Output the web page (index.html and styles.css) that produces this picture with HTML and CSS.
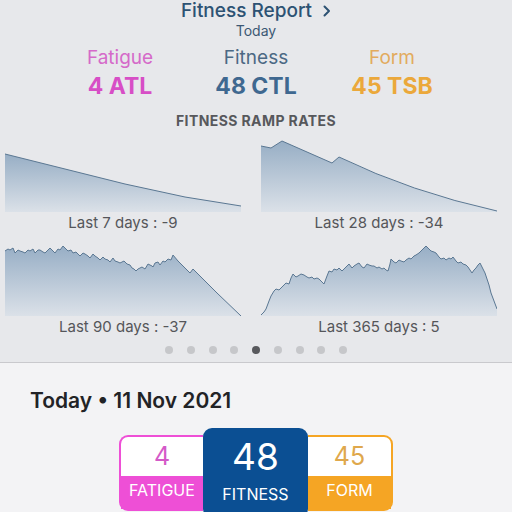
FILE: index.html
```html
<!DOCTYPE html>
<html lang="en">
<head>
  <meta charset="UTF-8" />
  <meta name="viewport" content="width=device-width, initial-scale=1.0"/>
  <title>Fitness Report</title>
  <link rel="stylesheet" href="styles.css">
</head>
<body>
  <section class="report">
    <h1 class="title">Fitness Report
      <svg class="chevron" width="8" height="12" viewBox="0 0 8 12"><path d="M1.5 1.5 L6 6 L1.5 10.5" fill="none" stroke="currentColor" stroke-width="2" stroke-linecap="round" stroke-linejoin="round"/></svg>
    </h1>
    <div class="subtitle">Today</div>

    <div class="stats">
      <div class="stat fatigue">
        <div class="stat-label">Fatigue</div>
        <div class="stat-value">4 ATL</div>
      </div>
      <div class="stat fitness">
        <div class="stat-label">Fitness</div>
        <div class="stat-value">48 CTL</div>
      </div>
      <div class="stat form">
        <div class="stat-label">Form</div>
        <div class="stat-value">45 TSB</div>
      </div>
    </div>

    <h2 class="section-head">FITNESS RAMP RATES</h2>

    <div class="charts">
      <figure class="chart">
        <svg width="236" height="72" viewBox="0 0 236 72">
          <defs>
            <linearGradient id="rampFill" x1="0" y1="0" x2="0" y2="1">
              <stop offset="0" stop-color="#97aec5"/>
              <stop offset="1" stop-color="#dbe1e8"/>
            </linearGradient>
          </defs>
          <path class="area" d="M0 14 L60 29 L120 44 L180 57 L236 66 L236 72 L0 72 Z"/>
          <path class="line" d="M0 14 L60 29 L120 44 L180 57 L236 66"/>
        </svg>
        <figcaption>Last 7 days : -9</figcaption>
      </figure>

      <figure class="chart">
        <svg width="236" height="72" viewBox="0 0 236 72">
          <path class="area" d="M0 6 L10 8 L21 1 L71 23 L78 17 Q150 52 236 71 L236 72 L0 72 Z"/>
          <path class="line" d="M0 6 L10 8 L21 1 L71 23 L78 17 Q150 52 236 71"/>
        </svg>
        <figcaption>Last 28 days : -34</figcaption>
      </figure>

      <figure class="chart">
        <svg width="236" height="72" viewBox="0 0 236 72">
          <path class="area" d="M0 7 L3 5 L5 6 L8 4 L10 9 L13 6 L15 7 L18 8 L20 9 L23 6 L25 7 L28 5 L30 9 L33 6 L35 6 L38 8 L40 9 L43 6 L45 4 L48 7 L50 9 L53 5 L55 6 L58 2 L61 5 L63 7 L66 6 L68 9 L71 8 L75 12 L78 9 L80 10 L83 12 L85 14 L88 10 L90 12 L93 14 L95 16 L98 13 L100 15 L103 16 L105 18 L108 14 L110 17 L113 18 L115 19 L119 17 L122 20 L125 21 L127 24 L129 25 L131 27 L133 25 L135 24 L137 23 L140 25 L143 20 L145 21 L147 22 L148 23 L150 19 L153 18 L155 21 L158 17 L160 18 L163 15 L166 16 L168 11 L173 17 L180 24 L185 29 L188 25 L195 32 L212 49 L236 72 L0 72 Z"/>
          <path class="line" d="M0 7 L3 5 L5 6 L8 4 L10 9 L13 6 L15 7 L18 8 L20 9 L23 6 L25 7 L28 5 L30 9 L33 6 L35 6 L38 8 L40 9 L43 6 L45 4 L48 7 L50 9 L53 5 L55 6 L58 2 L61 5 L63 7 L66 6 L68 9 L71 8 L75 12 L78 9 L80 10 L83 12 L85 14 L88 10 L90 12 L93 14 L95 16 L98 13 L100 15 L103 16 L105 18 L108 14 L110 17 L113 18 L115 19 L119 17 L122 20 L125 21 L127 24 L129 25 L131 27 L133 25 L135 24 L137 23 L140 25 L143 20 L145 21 L147 22 L148 23 L150 19 L153 18 L155 21 L158 17 L160 18 L163 15 L166 16 L168 11 L173 17 L180 24 L185 29 L188 25 L195 32 L212 49 L236 72"/>
        </svg>
        <figcaption>Last 90 days : -37</figcaption>
      </figure>

      <figure class="chart">
        <svg width="236" height="72" viewBox="0 0 236 72">
          <path class="area" d="M0 71 L3 68 L5 65 L8 57 L10 52 L13 47 L15 45 L18 46 L20 44 L23 41 L25 39 L28 40 L30 34 L32 30 L35 33 L37 32 L40 30 L43 31 L46 33 L48 34 L51 33 L53 35 L56 34 L58 35 L61 38 L63 40 L66 32 L68 27 L71 28 L73 25 L76 26 L78 24 L81 27 L83 25 L86 22 L88 20 L91 24 L93 22 L96 20 L98 19 L101 23 L103 24 L106 20 L108 21 L111 22 L113 22 L116 24 L118 23 L121 25 L123 24 L125 26 L127 27 L129 20 L130 15 L133 18 L135 19 L138 16 L140 17 L143 18 L145 16 L148 14 L150 15 L153 12 L155 11 L158 9 L160 7 L163 4 L165 2 L168 5 L170 7 L173 8 L175 9 L178 13 L180 15 L183 14 L185 16 L188 14 L190 15 L192 13 L195 17 L197 19 L200 18 L202 20 L205 21 L207 23 L209 26 L211 29 L213 26 L215 24 L217 21 L219 19 L221 23 L222 25 L224 29 L225 32 L228 41 L230 49 L233 57 L236 65 L236 72 L0 72 Z"/>
          <path class="line" d="M0 71 L3 68 L5 65 L8 57 L10 52 L13 47 L15 45 L18 46 L20 44 L23 41 L25 39 L28 40 L30 34 L32 30 L35 33 L37 32 L40 30 L43 31 L46 33 L48 34 L51 33 L53 35 L56 34 L58 35 L61 38 L63 40 L66 32 L68 27 L71 28 L73 25 L76 26 L78 24 L81 27 L83 25 L86 22 L88 20 L91 24 L93 22 L96 20 L98 19 L101 23 L103 24 L106 20 L108 21 L111 22 L113 22 L116 24 L118 23 L121 25 L123 24 L125 26 L127 27 L129 20 L130 15 L133 18 L135 19 L138 16 L140 17 L143 18 L145 16 L148 14 L150 15 L153 12 L155 11 L158 9 L160 7 L163 4 L165 2 L168 5 L170 7 L173 8 L175 9 L178 13 L180 15 L183 14 L185 16 L188 14 L190 15 L192 13 L195 17 L197 19 L200 18 L202 20 L205 21 L207 23 L209 26 L211 29 L213 26 L215 24 L217 21 L219 19 L221 23 L222 25 L224 29 L225 32 L228 41 L230 49 L233 57 L236 65"/>
        </svg>
        <figcaption>Last 365 days : 5</figcaption>
      </figure>
    </div>

    <div class="dots">
      <span class="dot"></span>
      <span class="dot"></span>
      <span class="dot"></span>
      <span class="dot"></span>
      <span class="dot active"></span>
      <span class="dot"></span>
      <span class="dot"></span>
      <span class="dot"></span>
      <span class="dot"></span>
    </div>
  </section>

  <section class="today">
    <h2 class="date">Today • 11 Nov 2021</h2>

    <div class="badges">
      <div class="badge side fatigue">
        <div class="badge-num">4</div>
        <div class="badge-label">FATIGUE</div>
      </div>
      <div class="badge main">
        <div class="badge-num">48</div>
        <div class="badge-label">FITNESS</div>
      </div>
      <div class="badge side form">
        <div class="badge-num">45</div>
        <div class="badge-label">FORM</div>
      </div>
    </div>
  </section>
</body>
</html>
```

FILE: styles.css
```css
body {
  margin: 0;
  font-family: Inter, "Noto Sans", sans-serif;
  background-color: #f3f3f5;
  overflow: hidden;
}

/* top card */
.report {
  background-color: #e7e8eb;
  border-bottom: 1px solid #c9c9cd;
  padding-bottom: 8px;
  text-align: center;
}
.title {
  margin: -1px 0 0;
  font-size: 19px;
  line-height: 23px;
  font-weight: 500;
  color: #2d5273;
}
.chevron { margin-left: 6px; vertical-align: 0; }
.subtitle {
  font-size: 14px;
  line-height: 17px;
  color: #3c5874;
}

.stats {
  width: 408px;
  margin: 8px auto 0;
  display: grid;
  grid-template-columns: repeat(3, 1fr);
}
.stat-label { font-size: 19px; line-height: 22px; }
.stat-value {
  font-size: 23px;
  line-height: 28px;
  font-weight: 700;
  margin-top: 3px;
}
.stat.fatigue .stat-label { color: #d56ac9; }
.stat.fatigue .stat-value { color: #d74ec6; }
.stat.fitness .stat-label { color: #4c6984; }
.stat.fitness .stat-value { color: #3f6890; }
.stat.form .stat-label { color: #e2ab5e; }
.stat.form .stat-value { color: #eba83b; }

.section-head {
  margin: 12px 0 0;
  font-size: 14px;
  line-height: 17px;
  font-weight: 700;
  letter-spacing: 0.4px;
  color: #57585c;
}

.charts {
  margin: 11px 0 0 5px;
  display: grid;
  grid-template-columns: 236px 236px;
  column-gap: 20px;
  row-gap: 12px;
}
.chart { margin: 0; }
.chart svg { display: block; }
.chart .area { fill: url(#rampFill); }
.chart .line {
  fill: none;
  stroke: #5a7792;
  stroke-width: 1;
  stroke-linejoin: round;
}
.chart figcaption {
  margin-top: 2px;
  font-size: 15px;
  line-height: 18px;
  color: #55565a;
}

.dots {
  margin-top: 10px;
  display: flex;
  justify-content: center;
  gap: 13.75px;
}
.dot {
  width: 8px;
  height: 8px;
  border-radius: 50%;
  background-color: #c6c7ca;
}
.dot.active { background-color: #58595d; }

/* today block */
.today { padding: 25px 0 0 30px; }
.date {
  margin: 0;
  font-size: 21px;
  line-height: 26px;
  font-weight: 600;
  color: #222326;
}

.badges {
  margin: 14px 0 0 -30px;
  display: flex;
  justify-content: center;
  align-items: center;
}
.badge {
  display: flex;
  flex-direction: column;
  text-align: center;
  box-sizing: border-box;
}
.badge.side {
  width: 84px;
  height: 76px;
  border: 2px solid;
  background-color: #fff;
}
.badge.fatigue {
  border-color: #ee4fd6;
  border-right: none;
  border-radius: 9px 0 0 9px;
}
.badge.form {
  width: 85px;
  border-color: #f5a524;
  border-left: none;
  border-radius: 0 9px 9px 0;
}
.badge.side .badge-num {
  height: 39px;
  font-size: 25px;
  line-height: 39px;
}
.badge.side .badge-label {
  flex: 1;
  padding-top: 5px;
  font-size: 16px;
  line-height: 19px;
  color: #fff;
}
.badge.fatigue .badge-num { color: #d45ac8; }
.badge.fatigue .badge-label { background-color: #ee4fd6; }
.badge.form .badge-num { color: #dfa84c; }
.badge.form .badge-label { background-color: #f5a524; }

.badge.main {
  width: 105px;
  height: 90px;
  padding-top: 9px;
  border-radius: 9px;
  background-color: #0b4f93;
  color: #fff;
}
.badge.main .badge-num {
  font-size: 37px;
  line-height: 40px;
  font-weight: 400;
}
.badge.main .badge-label {
  margin-top: 8px;
  font-size: 16px;
  line-height: 19px;
}
```
